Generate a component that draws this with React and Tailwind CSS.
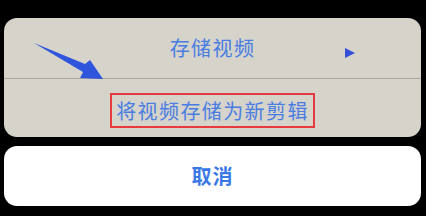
export default function App() {
  const font = { fontFamily: '"Noto Sans CJK SC", "Noto Sans", sans-serif' };
  return (
    <div className="w-[426px] h-[216px] bg-black relative overflow-hidden" style={font}>
      <div className="pt-[18px] pl-[4px] pr-[5px] flex flex-col">
        <div className="h-[119px] rounded-[13px] bg-[#d6d3cb] flex flex-col overflow-hidden">
          <div className="h-[60px] flex items-center justify-center relative">
            <span className="text-[20px] leading-none text-[#4a7de2] tracking-[1.4px]">存储视频</span>
            <svg className="absolute left-[340px] top-[29px]" width="12" height="12" viewBox="0 0 12 12">
              <polygon points="1,1 11,6 1,11" fill="#3550d8" />
            </svg>
          </div>
          <div className="h-px bg-[#a9a79f]" />
          <div className="flex-1 flex items-center justify-center pt-[5px]">
            <div className="w-[205px] h-[35px] border-2 border-[#e63a3f] flex items-center justify-center">
              <span className="text-[20px] leading-none text-[#4a7de2] tracking-[1.4px]">将视频存储为新剪辑</span>
            </div>
          </div>
        </div>
        <div className="mt-[9px] h-[60px] rounded-[13px] bg-white flex items-center justify-center">
          <span className="text-[20px] leading-none font-semibold text-[#3a78e6] tracking-[1px]">取消</span>
        </div>
      </div>
      <svg className="absolute left-0 top-0" width="426" height="216" viewBox="0 0 426 216">
        <polygon points="34,43 85,64 90,60 103,79 80,78 83,72" fill="#2f55dc" />
      </svg>
    </div>
  );
}
